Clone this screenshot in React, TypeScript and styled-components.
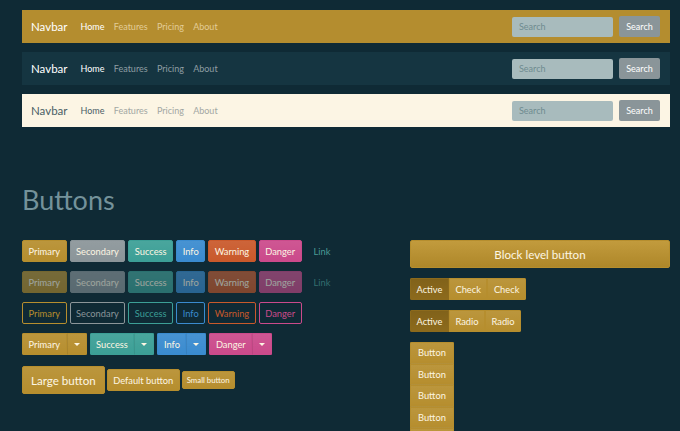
import React from "react";
import styled, { createGlobalStyle, css } from "styled-components";

const Global = createGlobalStyle`
  html, body { margin: 0; padding: 0; background: #0f2a35; }
  body { font-family: Lato, "Liberation Sans", sans-serif; -webkit-font-smoothing: antialiased; }
  * { box-sizing: border-box; }
`;

const Page = styled.div`
  width: 680px;
  height: 431px;
  overflow: hidden;
  padding: 10px 10px 0 22px;
`;

type NavKind = "primary" | "dark" | "light";

const navBg: Record<NavKind, string> = {
  primary: "#b48d2f",
  dark: "#153541",
  light: "#fcf5e4",
};

const Navbar = styled.nav<{ $kind: NavKind }>`
  display: flex;
  align-items: center;
  height: 33px;
  padding: 0 10px 0 9px;
  margin-bottom: 9px;
  background: ${(p) => navBg[p.$kind]};
`;

const Brand = styled.span<{ $kind: NavKind }>`
  font-size: 11.5px;
  margin-right: 13px;
  color: ${(p) => (p.$kind === "light" ? "#4b5f66" : "#ffffff")};
`;

const NavLink = styled.span<{ $kind: NavKind; $active?: boolean }>`
  font-size: 9px;
  margin-right: 9.3px;
  color: ${(p) =>
    p.$kind === "light"
      ? p.$active
        ? "#4b5f66"
        : "#a2a7a3"
      : p.$kind === "primary"
      ? p.$active
        ? "#ffffff"
        : "#e2cc97"
      : p.$active
      ? "#ffffff"
      : "#8f9ea3"};
`;

const Spacer = styled.div`
  flex: 1;
`;

const SearchInput = styled.div`
  width: 101px;
  height: 20px;
  border-radius: 2px;
  background: #a8bbbd;
  color: #6f8b90;
  font-size: 9px;
  display: flex;
  align-items: center;
  padding-left: 7px;
  margin-right: 6px;
`;

const SearchButton = styled.div`
  width: 41px;
  height: 21px;
  border-radius: 2px;
  background: #8a9599;
  color: #ffffff;
  font-size: 9px;
  display: flex;
  align-items: center;
  justify-content: center;
`;

const Heading = styled.h1`
  margin: 56px 0 23px;
  font-weight: 400;
  font-size: 27px;
  line-height: 34px;
  color: #74929a;
`;

const Grid = styled.div`
  display: grid;
  grid-template-columns: 374px 260px;
  column-gap: 14px;
`;

const Col = styled.div`
  display: flex;
  flex-direction: column;
`;

const Row = styled.div<{ $mt?: number; $gap?: number }>`
  display: flex;
  align-items: center;
  gap: ${(p) => p.$gap ?? 3}px;
  margin-bottom: 9px;
  margin-top: ${(p) => p.$mt ?? 0}px;
`;

type Variant = "primary" | "secondary" | "success" | "info" | "warning" | "danger";

const colors: Record<Variant, string> = {
  primary: "#b68e2e",
  secondary: "#8b9599",
  success: "#3c9f96",
  info: "#3a8bcf",
  warning: "#c9592b",
  danger: "#cb4a8b",
};

type Size = "sm" | "md" | "lg";

const sizeCss = {
  sm: css`
    height: 18px;
    font-size: 7.8px;
    padding: 0 4px;
  `,
  md: css`
    height: 22px;
    font-size: 9.3px;
    padding: 0 5.5px;
  `,
  lg: css`
    height: 28px;
    font-size: 11.6px;
    padding: 0 8px;
  `,
};

const Btn = styled.div<{ $v: Variant; $outline?: boolean; $disabled?: boolean; $size?: Size }>`
  display: inline-flex;
  align-items: center;
  justify-content: center;
  border-radius: 2px;
  white-space: nowrap;
  border: 1px solid ${(p) => colors[p.$v]};
  ${(p) => sizeCss[p.$size ?? "md"]};
  ${(p) =>
    p.$outline
      ? css`
          color: ${colors[p.$v]};
          background: transparent;
        `
      : css`
          background: ${colors[p.$v]} linear-gradient(180deg, rgba(255, 255, 255, 0.07), rgba(255, 255, 255, 0));
          color: #fdf6e3;
        `};
  opacity: ${(p) => (p.$disabled ? 0.6 : 1)};
`;

const LinkBtn = styled.div<{ $disabled?: boolean }>`
  font-size: 9.3px;
  color: #4a9a95;
  padding: 0 9px;
  height: 22px;
  display: flex;
  align-items: center;
  opacity: ${(p) => (p.$disabled ? 0.6 : 1)};
`;

const Split = styled.div`
  display: inline-flex;
  border-radius: 2px;
  overflow: hidden;
`;

const SplitMain = styled(Btn)`
  border-radius: 0;
`;

const Toggle = styled(Btn)`
  border-radius: 0;
  width: 20px;
  padding: 0;
  border-left: 1px solid rgba(0, 0, 0, 0.08);
`;

const Caret = styled.span`
  width: 0;
  height: 0;
  border-left: 3px solid transparent;
  border-right: 3px solid transparent;
  border-top: 3px solid #fdf6e3;
`;

const BlockBtn = styled(Btn)`
  width: 100%;
  margin-bottom: 10px;
  background: linear-gradient(180deg, #c29b3d, #ae8729);
`;

const Group = styled.div`
  display: inline-flex;
  align-self: flex-start;
  border-radius: 2px;
  overflow: hidden;
  margin-bottom: 10px;
`;

const GroupBtn = styled(Btn)<{ $active?: boolean }>`
  border-radius: 0;
  ${(p) =>
    p.$active &&
    css`
      border-color: #8c6a1c;
      background: #8c6a1c linear-gradient(180deg, rgba(0, 0, 0, 0.08), rgba(0, 0, 0, 0));
    `}
`;

const VGroup = styled.div`
  display: inline-flex;
  flex-direction: column;
  align-self: flex-start;
  border-radius: 2px;
  overflow: hidden;
`;

const VBtn = styled(Btn)`
  border-radius: 0;
  height: 21.6px;
  padding: 0 7px;
  border-bottom-color: rgba(0, 0, 0, 0.04);
`;

const variants: Variant[] = ["primary", "secondary", "success", "info", "warning", "danger"];
const label = (v: Variant) => v[0].toUpperCase() + v.slice(1);

const NavbarBlock = ({ kind }: { kind: NavKind }) => (
  <Navbar $kind={kind}>
    <Brand $kind={kind}>Navbar</Brand>
    <NavLink $kind={kind} $active>
      Home
    </NavLink>
    <NavLink $kind={kind}>Features</NavLink>
    <NavLink $kind={kind}>Pricing</NavLink>
    <NavLink $kind={kind}>About</NavLink>
    <Spacer />
    <SearchInput>Search</SearchInput>
    <SearchButton>Search</SearchButton>
  </Navbar>
);

export default function App() {
  return (
    <Page>
      <Global />
      <NavbarBlock kind="primary" />
      <NavbarBlock kind="dark" />
      <NavbarBlock kind="light" />
      <Heading>Buttons</Heading>
      <Grid>
        <Col>
          <Row>
            {variants.map((v) => (
              <Btn key={v} $v={v}>
                {label(v)}
              </Btn>
            ))}
            <LinkBtn>Link</LinkBtn>
          </Row>
          <Row>
            {variants.map((v) => (
              <Btn key={v} $v={v} $disabled>
                {label(v)}
              </Btn>
            ))}
            <LinkBtn $disabled>Link</LinkBtn>
          </Row>
          <Row>
            {variants.map((v) => (
              <Btn key={v} $v={v} $outline>
                {label(v)}
              </Btn>
            ))}
          </Row>
          <Row>
            {(["primary", "success", "info", "danger"] as Variant[]).map((v) => (
              <Split key={v}>
                <SplitMain $v={v}>{label(v)}</SplitMain>
                <Toggle $v={v}>
                  <Caret />
                </Toggle>
              </Split>
            ))}
          </Row>
          <Row $mt={2} $gap={2}>
            <Btn $v="primary" $size="lg">
              Large button
            </Btn>
            <Btn $v="primary">Default button</Btn>
            <Btn $v="primary" $size="sm">
              Small button
            </Btn>
          </Row>
        </Col>
        <Col>
          <BlockBtn $v="primary" $size="lg">
            Block level button
          </BlockBtn>
          <Group>
            <GroupBtn $v="primary" $active>
              Active
            </GroupBtn>
            <GroupBtn $v="primary">Check</GroupBtn>
            <GroupBtn $v="primary">Check</GroupBtn>
          </Group>
          <Group>
            <GroupBtn $v="primary" $active>
              Active
            </GroupBtn>
            <GroupBtn $v="primary">Radio</GroupBtn>
            <GroupBtn $v="primary">Radio</GroupBtn>
          </Group>
          <VGroup>
            {[0, 1, 2, 3, 4].map((i) => (
              <VBtn key={i} $v="primary">
                Button
              </VBtn>
            ))}
          </VGroup>
        </Col>
      </Grid>
    </Page>
  );
}
